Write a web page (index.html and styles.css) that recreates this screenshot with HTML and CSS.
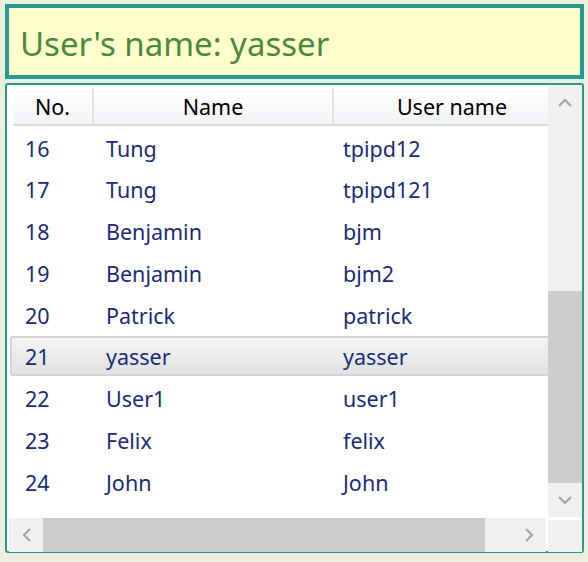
FILE: index.html
```html
<!DOCTYPE html>
<html>
<head>
<meta charset="utf-8">
<link rel="stylesheet" href="styles.css">
</head>
<body>
<div class="app">
  <div class="banner">User's name: yasser</div>
  <div class="listbox">
    <div class="viewport">
      <div class="header">
        <div class="hcell c1">No.</div>
        <div class="hcell c2">Name</div>
        <div class="hcell c3">User name</div>
      </div>
      <div class="rows">
        <div class="row"><div class="cell c1">16</div><div class="cell c2">Tung</div><div class="cell c3">tpipd12</div></div>
        <div class="row"><div class="cell c1">17</div><div class="cell c2">Tung</div><div class="cell c3">tpipd121</div></div>
        <div class="row"><div class="cell c1">18</div><div class="cell c2">Benjamin</div><div class="cell c3">bjm</div></div>
        <div class="row"><div class="cell c1">19</div><div class="cell c2">Benjamin</div><div class="cell c3">bjm2</div></div>
        <div class="row"><div class="cell c1">20</div><div class="cell c2">Patrick</div><div class="cell c3">patrick</div></div>
        <div class="row selected"><div class="cell c1">21</div><div class="cell c2">yasser</div><div class="cell c3">yasser</div></div>
        <div class="row"><div class="cell c1">22</div><div class="cell c2">User1</div><div class="cell c3">user1</div></div>
        <div class="row"><div class="cell c1">23</div><div class="cell c2">Felix</div><div class="cell c3">felix</div></div>
        <div class="row"><div class="cell c1">24</div><div class="cell c2">John</div><div class="cell c3">John</div></div>
      </div>
    </div>
    <div class="vscroll">
      <div class="sbtn"><svg width="14" height="9" viewBox="0 0 14 9"><polyline points="1,8 7,2 13,8" fill="none" stroke="#a6a6a6" stroke-width="2.2"/></svg></div>
      <div class="vtrack"><div class="vthumb"></div></div>
      <div class="sbtn"><svg width="14" height="9" viewBox="0 0 14 9"><polyline points="1,1 7,7 13,1" fill="none" stroke="#a6a6a6" stroke-width="2.2"/></svg></div>
    </div>
    <div class="hscroll">
      <div class="sbtn"><svg width="9" height="14" viewBox="0 0 9 14"><polyline points="8,1 2,7 8,13" fill="none" stroke="#a6a6a6" stroke-width="2.2"/></svg></div>
      <div class="htrack"><div class="hthumb"></div></div>
      <div class="sbtn"><svg width="9" height="14" viewBox="0 0 9 14"><polyline points="1,1 7,7 1,13" fill="none" stroke="#a6a6a6" stroke-width="2.2"/></svg></div>
    </div>
    <div class="corner"></div>
  </div>
</div>
</body>
</html>
```
FILE: styles.css
```css
html, body {
  margin: 0;
  padding: 0;
  background: #eeeedf;
}
body {
  font-family: "Noto Sans", "Open Sans", sans-serif;
}
.app {
  width: 579px;
  margin: 4px 0 0 5px;
  display: flex;
  flex-direction: column;
  gap: 4px;
}
.banner {
  box-sizing: border-box;
  height: 75px;
  border: 4px solid #259b8f;
  background: #ffffcc;
  color: #4a8a3f;
  font-size: 33px;
  display: flex;
  align-items: center;
  padding: 3px 0 0 11px;
  white-space: nowrap;
}
.listbox {
  box-sizing: border-box;
  height: 470px;
  border: 2px solid #259b8f;
  border-radius: 3px;
  background: #ffffff;
  display: grid;
  grid-template-columns: 1fr 34px;
  grid-template-rows: 1fr 34px;
}
.viewport {
  overflow: hidden;
  padding-top: 3px;
  min-width: 0;
}
.header {
  display: flex;
  margin-left: 6px;
  width: 560px;
  height: 38px;
  box-sizing: border-box;
  border-bottom: 2px solid #d9d9d9;
  background: linear-gradient(#ffffff, #f1f3f6);
}
.hcell {
  box-sizing: border-box;
  flex: none;
  display: flex;
  align-items: center;
  justify-content: center;
  color: #000;
  font-size: 21.5px;
  padding-top: 1px;
  border-right: 2px solid #e2e2e2;
}
.c1 { width: 81px; }
.c2 { width: 240px; }
.c3 { width: 238px; }
.rows {
  margin-left: 3px;
  padding-top: 1px;
}
.row {
  box-sizing: border-box;
  display: flex;
  width: 570px;
  height: 40px;
  margin-bottom: 1.8px;
  border: 2px solid transparent;
  border-radius: 3px;
  padding: 2px 0 0 1px;
}
.row.selected {
  border-color: #d4d4d4;
  background: linear-gradient(#f4f4f4, #e2e2e2);
}
.cell {
  box-sizing: border-box;
  flex: none;
  display: flex;
  align-items: center;
  padding-left: 12px;
  color: #1a2b7a;
  font-size: 21.5px;
  white-space: nowrap;
}
.cell.c3 { padding-left: 9px; }
.vscroll {
  background: #f0f0f0;
  display: flex;
  flex-direction: column;
  margin-bottom: 1px;
}
.sbtn {
  flex: none;
  width: 34px;
  height: 34px;
  display: flex;
  align-items: center;
  justify-content: center;
}
.vtrack {
  flex: 1;
  display: flex;
  flex-direction: column;
  padding-top: 172px;
}
.vthumb {
  height: 192px;
  background: #cdcdcd;
}
.hscroll {
  background: #f0f0f0;
  display: flex;
  margin: 0 2px 0 2px;
}
.htrack {
  flex: 1;
  display: flex;
}
.hthumb {
  width: 442px;
  background: #cdcdcd;
}
.corner {
  background: #f0f0f0;
  margin: 2px 0 0 0;
}
```
